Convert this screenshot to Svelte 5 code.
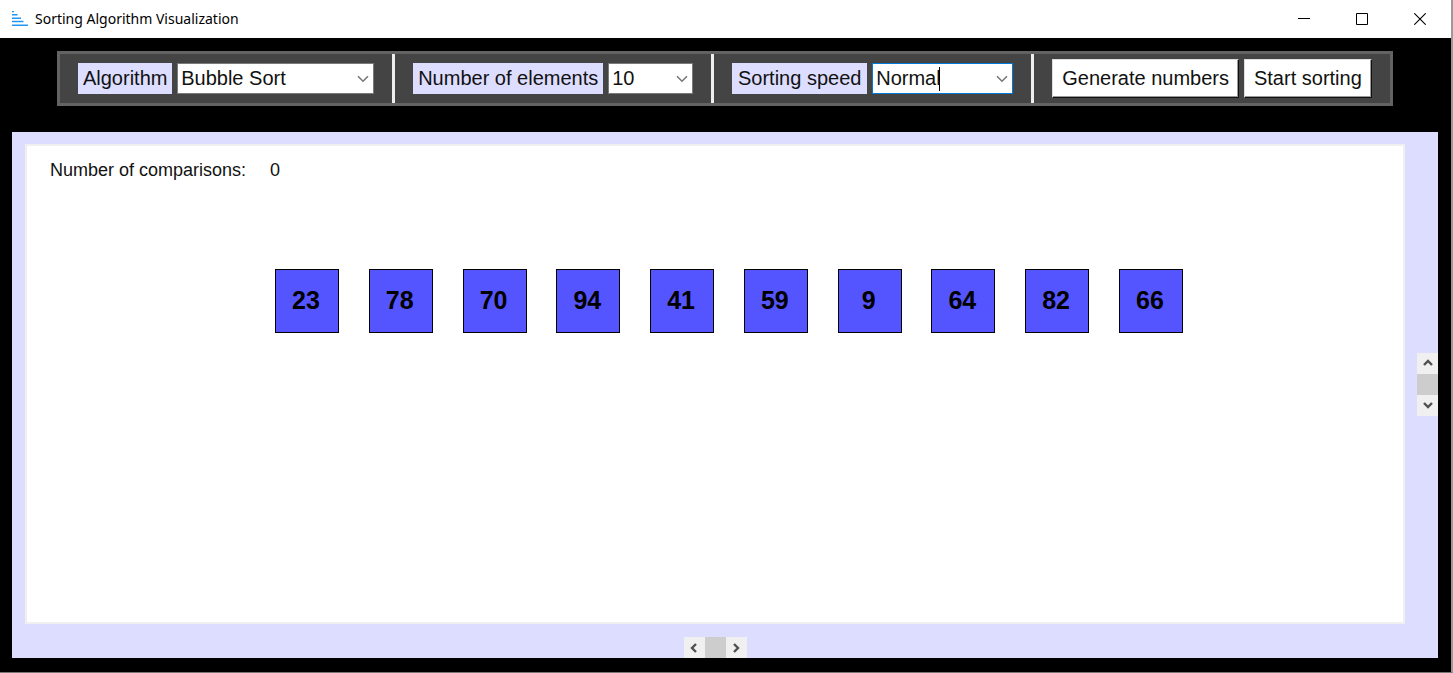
<script>
  let algorithm = $state('Bubble Sort');
  let count = $state('10');
  let speed = $state('Normal');
  let comparisons = $state(0);
  let numbers = $state([23, 78, 70, 94, 41, 59, 9, 64, 82, 66]);

  const algorithms = ['Bubble Sort', 'Selection Sort', 'Insertion Sort'];
  const counts = ['8', '10', '12'];
  const speeds = ['Slow', 'Normal', 'Fast'];

  function generate() {
    comparisons = 0;
    numbers = Array.from({ length: Number(count) }, () => 1 + Math.floor(Math.random() * 99));
  }

  function sortNumbers() {
    const list = [...numbers];
    let steps = 0;
    for (let end = list.length - 1; end > 0; end--) {
      for (let i = 0; i < end; i++) {
        steps++;
        if (list[i] > list[i + 1]) [list[i], list[i + 1]] = [list[i + 1], list[i]];
      }
    }
    numbers = list;
    comparisons = steps;
  }
</script>

{#snippet chevron()}
  <svg class="chevron" width="12" height="8" viewBox="0 0 12 8" aria-hidden="true">
    <path d="M1 1.2 6 6.2 11 1.2" fill="none" stroke="#777" stroke-width="1.6" />
  </svg>
{/snippet}

{#snippet arrow(d)}
  <svg width="12" height="12" viewBox="0 0 12 12" aria-hidden="true">
    <path {d} fill="none" stroke="#505050" stroke-width="2.4" />
  </svg>
{/snippet}

<div class="window">
  <header class="titlebar">
    <svg class="logo" width="16" height="16" viewBox="0 0 16 16" aria-hidden="true">
      <path d="M0 .5h2M0 3.8h5.5M0 7.2h9M0 10.5h11.5M0 14.3h16" stroke="#2196f3" stroke-width="1.5" fill="none" />
    </svg>
    <h1>Sorting Algorithm Visualization</h1>
    <div class="caption">
      <button aria-label="Minimize">
        <svg width="12" height="12" viewBox="0 0 12 12"><path d="M0 5.5h12" stroke="#000" /></svg>
      </button>
      <button aria-label="Maximize">
        <svg width="12" height="12" viewBox="0 0 12 12"><path d="M.5.5h11v11H.5z" stroke="#000" fill="none" /></svg>
      </button>
      <button aria-label="Close">
        <svg width="12" height="12" viewBox="0 0 12 12"><path d="M.3.3l11.4 11.4M11.7.3.3 11.7" stroke="#000" stroke-width="1.1" /></svg>
      </button>
    </div>
  </header>

  <main>
    <div class="toolbar">
      <div class="group algorithm">
        <label for="algorithm">Algorithm</label>
        <div class="combo">
          <select id="algorithm" bind:value={algorithm}>
            {#each algorithms as name}<option>{name}</option>{/each}
          </select>
          {@render chevron()}
        </div>
      </div>
      <div class="group count">
        <label for="count">Number of elements</label>
        <div class="combo">
          <select id="count" bind:value={count}>
            {#each counts as n}<option>{n}</option>{/each}
          </select>
          {@render chevron()}
        </div>
      </div>
      <div class="group speed">
        <label for="speed">Sorting speed</label>
        <div class="combo active">
          <select id="speed" bind:value={speed}>
            {#each speeds as s}<option>{s}</option>{/each}
          </select>
          <span class="caret"></span>
          {@render chevron()}
        </div>
      </div>
      <div class="group actions">
        <button onclick={generate}>Generate numbers</button>
        <button onclick={sortNumbers}>Start sorting</button>
      </div>
    </div>

    <div class="stage">
      <section class="canvas">
        <p><span>Number of comparisons:</span><span>{comparisons}</span></p>
        <div class="cells">
          {#each numbers as n}<div class="cell">{n}</div>{/each}
        </div>
      </section>
      <div class="scroll vertical">
        <button aria-label="Scroll up">{@render arrow('M2 8 6 4 10 8')}</button>
        <div class="thumb"></div>
        <button aria-label="Scroll down">{@render arrow('M2 4 6 8 10 4')}</button>
      </div>
      <div class="scroll horizontal">
        <button aria-label="Scroll left">{@render arrow('M8 2 4 6 8 10')}</button>
        <div class="thumb"></div>
        <button aria-label="Scroll right">{@render arrow('M4 2 8 6 4 10')}</button>
      </div>
    </div>
  </main>
</div>

<style>
  :global(body) {
    margin: 0;
  }

  .window,
  .window * {
    box-sizing: border-box;
  }

  .window {
    display: flex;
    flex-direction: column;
    min-height: 100vh;
    border-right: 2px solid #9a9a9a;
    border-bottom: 1px solid #777;
    background: #000;
    font-family: 'Liberation Sans', Arial, sans-serif;
    color: #111;
  }

  .titlebar {
    display: flex;
    align-items: center;
    height: 38px;
    padding: 0 2px 0 12px;
    background: #fff;
  }

  .logo {
    margin-right: 7px;
  }

  h1 {
    flex: 1;
    margin: 0;
    font: 400 14px/20px 'Noto Sans', 'Segoe UI', sans-serif;
    color: #000;
  }

  .caption {
    display: flex;
  }

  .caption button {
    display: grid;
    place-items: center;
    width: 58px;
    height: 38px;
    padding: 0;
    border: 0;
    background: none;
  }

  main {
    flex: 1;
    display: flex;
    flex-direction: column;
    gap: 26px;
    padding: 13px 13px 14px 12px;
  }

  .toolbar {
    display: flex;
    align-self: center;
    border: 3px solid #636363;
    background: #444;
    font-size: 20px;
    line-height: 24px;
  }

  .group {
    display: flex;
    align-items: center;
    gap: 5px;
    height: 49px;
    padding: 0 18px;
  }

  .group + .group {
    border-left: 3px solid #eee;
  }

  label {
    padding: 4px 0;
    background: #ddf;
    line-height: 23px;
    text-align: center;
    white-space: nowrap;
  }

  .algorithm label {
    width: 94px;
  }

  .count label {
    width: 190px;
  }

  .speed label {
    width: 135px;
  }

  .combo {
    position: relative;
    display: flex;
    align-items: center;
  }

  select {
    appearance: none;
    width: 100%;
    height: 31px;
    margin: 0;
    padding: 0 24px 2px 3px;
    border: 1px solid #7a7a7a;
    border-radius: 0;
    outline: 0;
    background: #fff;
    color: #111;
    font: inherit;
  }

  .algorithm .combo {
    width: 197px;
  }

  .count .combo {
    width: 85px;
  }

  .speed .combo {
    width: 141px;
  }

  .active select {
    border-color: #0078d7;
  }

  .chevron {
    position: absolute;
    right: 5px;
    pointer-events: none;
  }

  .caret {
    position: absolute;
    left: 67px;
    width: 1px;
    height: 24px;
    background: #000;
  }

  .actions button {
    height: 39px;
    padding: 0 9px 2px;
    border: 1px solid;
    border-color: #ddd #111 #111 #ddd;
    background: #fff;
    box-shadow: inset -1px -1px #999;
    color: #111;
    font: inherit;
    white-space: nowrap;
  }

  .stage {
    flex: 1;
    display: grid;
    grid-template: 1fr 34px / 1fr 33px;
    padding: 12px 0 0 13px;
    background: #ddf;
  }

  .canvas {
    padding: 12px 22px 24px 23px;
    border: 2px solid #f0f0f0;
    background: #fff;
  }

  p {
    display: flex;
    gap: 24px;
    margin: 0;
    font-size: 18px;
    line-height: 24px;
  }

  .cells {
    display: flex;
    justify-content: space-between;
    max-width: 935px;
    margin: 87px auto 0;
    padding-left: 27px;
  }

  .cell {
    display: grid;
    place-items: center;
    flex: none;
    width: 64px;
    height: 64px;
    padding: 0 2px 2px 0;
    border: 1px solid #000;
    background: #55f;
    color: #000;
    font-size: 25px;
    font-weight: 700;
    line-height: 28px;
  }

  .scroll {
    display: flex;
    place-self: center end;
    background: #f0f0f0;
  }

  .vertical {
    flex-direction: column;
  }

  .horizontal {
    place-self: end center;
  }

  .scroll button {
    display: grid;
    place-items: center;
    width: 21px;
    height: 21px;
    padding: 0;
    border: 0;
    background: none;
  }

  .thumb {
    width: 21px;
    height: 21px;
    background: #cdcdcd;
  }
</style>
